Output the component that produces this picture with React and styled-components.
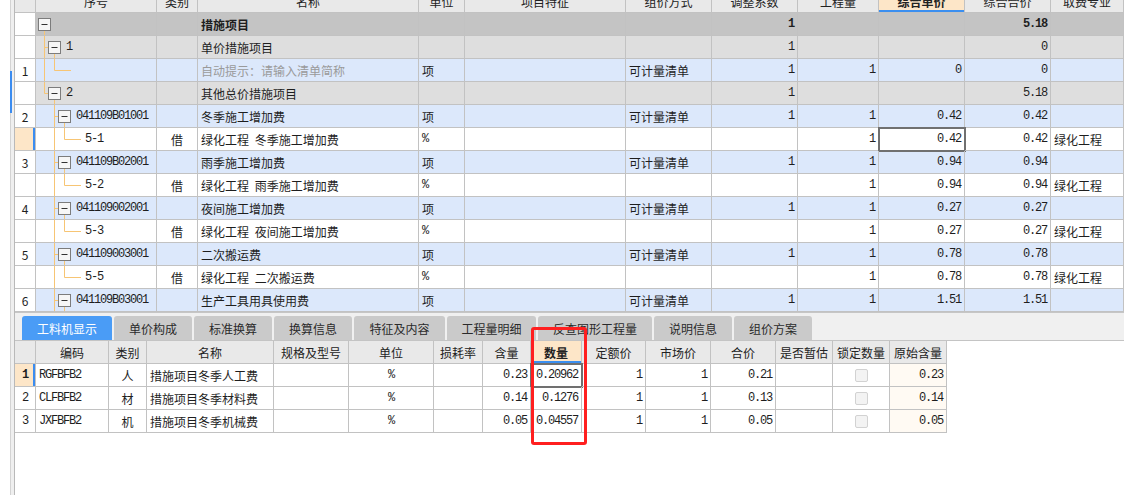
import React from 'react'
import styled, { createGlobalStyle } from 'styled-components'

// Columns (widths include each cell's right border)
const TOP_COLS = '21px 121px 41px 221px 46px 161px 86px 86px 81px 86px 86px 1fr'
const BOTTOM_COLS = '21px 73px 38px 127px 75px 85px 49px 48px 51px 64px 65px 65px 57px 57px 57px'

const ROW_BG = {
  head: '#e9e9e9',
  top: '#c4c4c4',
  group: '#dedede',
  list: '#dce8fb',
  quota: '#ffffff'
}

const topHeader = ['', '序号', '类别', '名称', '单位', '项目特征', '组价方式', '调整系数', '工程量', '综合单价', '综合合价', '取费专业']

const topRows = [
  { kind: 'top', tree: 'root', name: '措施项目', adj: '1', total: '5.18', bold: true },
  { kind: 'group', tree: 'group', code: '1', name: '单价措施项目', adj: '1', total: '0' },
  { kind: 'list', num: '1', tree: 'hint', name: '自动提示：请输入清单简称', hint: true, unit: '项', method: '可计量清单', adj: '1', qty: '1', price: '0', total: '0' },
  { kind: 'group', tree: 'groupLast', code: '2', name: '其他总价措施项目', adj: '1', total: '5.18' },
  { kind: 'list', num: '2', tree: 'list', code: '041109B01001', name: '冬季施工增加费', unit: '项', method: '可计量清单', adj: '1', qty: '1', price: '0.42', total: '0.42' },
  { kind: 'quota', tree: 'quota', code: '5-1', type: '借', name: '绿化工程 冬季施工增加费', unit: '%', qty: '1', price: '0.42', total: '0.42', fee: '绿化工程', current: true },
  { kind: 'list', num: '3', tree: 'list', code: '041109B02001', name: '雨季施工增加费', unit: '项', method: '可计量清单', adj: '1', qty: '1', price: '0.94', total: '0.94' },
  { kind: 'quota', tree: 'quota', code: '5-2', type: '借', name: '绿化工程 雨季施工增加费', unit: '%', qty: '1', price: '0.94', total: '0.94', fee: '绿化工程' },
  { kind: 'list', num: '4', tree: 'list', code: '041109002001', name: '夜间施工增加费', unit: '项', method: '可计量清单', adj: '1', qty: '1', price: '0.27', total: '0.27' },
  { kind: 'quota', tree: 'quota', code: '5-3', type: '借', name: '绿化工程 夜间施工增加费', unit: '%', qty: '1', price: '0.27', total: '0.27', fee: '绿化工程' },
  { kind: 'list', num: '5', tree: 'list', code: '041109003001', name: '二次搬运费', unit: '项', method: '可计量清单', adj: '1', qty: '1', price: '0.78', total: '0.78' },
  { kind: 'quota', tree: 'quota', code: '5-5', type: '借', name: '绿化工程 二次搬运费', unit: '%', qty: '1', price: '0.78', total: '0.78', fee: '绿化工程' },
  { kind: 'list', num: '6', tree: 'list', code: '041109B03001', name: '生产工具用具使用费', unit: '项', method: '可计量清单', adj: '1', qty: '1', price: '1.51', total: '1.51' }
]

const tabs = [
  { label: '工料机显示', width: 90, active: true },
  { label: '单价构成', width: 78 },
  { label: '标准换算', width: 78 },
  { label: '换算信息', width: 78 },
  { label: '特征及内容', width: 91 },
  { label: '工程量明细', width: 89 },
  { label: '反查图形工程量', width: 114 },
  { label: '说明信息', width: 78 },
  { label: '组价方案', width: 78 }
]

const bottomHeader = ['', '编码', '类别', '名称', '规格及型号', '单位', '损耗率', '含量', '数量', '定额价', '市场价', '合价', '是否暂估', '锁定数量', '原始含量']

const bottomRows = [
  { num: '1', code: 'RGFBFB2', type: '人', name: '措施项目冬季人工费', content: '0.23', qty: '0.20962', sum: '0.21', orig: '0.23', current: true },
  { num: '2', code: 'CLFBFB2', type: '材', name: '措施项目冬季材料费', content: '0.14', qty: '0.1276', sum: '0.13', orig: '0.14' },
  { num: '3', code: 'JXFBFB2', type: '机', name: '措施项目冬季机械费', content: '0.05', qty: '0.04557', sum: '0.05', orig: '0.05' }
]

// Tree connectors for the 序号 column
const TREE = {
  root: { width: 20, box: 2.5, lines: [[8.5, 17, 8.5, 23]] },
  group: { width: 30, box: 12.5, lines: [[8.5, 0, 8.5, 23], [8.5, 11.5, 12, 11.5], [18.5, 17, 18.5, 23]] },
  groupLast: { width: 30, box: 12.5, lines: [[8.5, 0, 8.5, 11.5], [8.5, 11.5, 12, 11.5], [18.5, 17, 18.5, 23]] },
  hint: { width: 40, lines: [[8.5, 0, 8.5, 23], [18.5, 0, 18.5, 11.5], [18.5, 11.5, 35, 11.5]] },
  list: { width: 40, box: 22.5, lines: [[18.5, 0, 18.5, 23], [18.5, 11.5, 22, 11.5], [28.5, 17, 28.5, 23]] },
  quota: { width: 49, lines: [[18.5, 0, 18.5, 23], [28.5, 0, 28.5, 11.5], [28.5, 11.5, 45, 11.5]] }
}

const TreeBranch = ({ type }) => {
  const t = TREE[type]
  return (
    <Branch width={t.width} height="22" viewBox={`0 0 ${t.width} 22`}>
      {t.lines.map(([x1, y1, x2, y2], i) => (
        <line key={i} x1={x1} y1={y1} x2={x2} y2={y2} stroke="#f7c574" strokeWidth="1" />
      ))}
      {t.box !== undefined && (
        <g>
          <rect x={t.box} y="5.5" width="12" height="12" fill="#f6f6f6" stroke="#7c7c7c" />
          <line x1={t.box + 3} y1="11.5" x2={t.box + 9} y2="11.5" stroke="#333" />
        </g>
      )}
    </Branch>
  )
}

const App = () => (
  <Page>
    <GlobalStyle />
    <Side>
      <Rail>
        <ScrollMark />
      </Rail>
    </Side>
    <Main>
      <TopGrid>
        <Scroller>
          <Row $cols={TOP_COLS} $bg={ROW_BG.head}>
            {topHeader.map((h, i) => (
              <HeadCell key={i} $active={h === '综合单价'}>{h}</HeadCell>
            ))}
          </Row>
          {topRows.map((r, i) => (
            <Row key={i} $cols={TOP_COLS} $bg={ROW_BG[r.kind]}>
              <NumCell $current={r.current}>{r.num}</NumCell>
              <TreeCell>
                <TreeBranch type={r.tree} />
                {r.code && <Mono>{r.code}</Mono>}
              </TreeCell>
              <Cell $align="center">{r.type}</Cell>
              <Cell $bold={r.bold} $muted={r.hint}>{r.name}</Cell>
              <Cell>{r.unit === '%' ? <Mono>%</Mono> : r.unit}</Cell>
              <Cell />
              <Cell>{r.method}</Cell>
              <Cell $align="right" $bold={r.bold}><Mono>{r.adj}</Mono></Cell>
              <Cell $align="right"><Mono>{r.qty}</Mono></Cell>
              <Cell $align="right" $selected={r.current}><Mono>{r.price}</Mono></Cell>
              <Cell $align="right" $bold={r.bold}><Mono>{r.total}</Mono></Cell>
              <Cell>{r.fee}</Cell>
            </Row>
          ))}
        </Scroller>
      </TopGrid>

      <TabBar>
        {tabs.map(t => (
          <Tab key={t.label} $width={t.width} $active={t.active}>{t.label}</Tab>
        ))}
      </TabBar>

      <Bottom>
        <Table>
          <Row $cols={BOTTOM_COLS} $bg={ROW_BG.head}>
            {bottomHeader.map((h, i) => (
              <HeadCell key={i} $active={h === '数量'}>{h}</HeadCell>
            ))}
          </Row>
          {bottomRows.map(r => (
            <Row key={r.num} $cols={BOTTOM_COLS} $bg="#fff">
              <NumCell $current={r.current}><Mono>{r.num}</Mono></NumCell>
              <Cell><Mono>{r.code}</Mono></Cell>
              <Cell $align="center">{r.type}</Cell>
              <Cell>{r.name}</Cell>
              <Cell />
              <Cell $align="center"><Mono>%</Mono></Cell>
              <Cell />
              <Cell $align="right"><Mono>{r.content}</Mono></Cell>
              <Cell $align="right" $selected={r.current}><Mono>{r.qty}</Mono></Cell>
              <Cell $align="right"><Mono>1</Mono></Cell>
              <Cell $align="right"><Mono>1</Mono></Cell>
              <Cell $align="right"><Mono>{r.sum}</Mono></Cell>
              <Cell />
              <Cell $align="center"><Check /></Cell>
              <Cell $align="right" $tint><Mono>{r.orig}</Mono></Cell>
            </Row>
          ))}
        </Table>
      </Bottom>
    </Main>
    <RedMark />
  </Page>
)

// Styles
const GlobalStyle = createGlobalStyle`
  html, body {
    margin: 0;
    padding: 0;
    background: #fff;
  }
  body {
    font-family: "Noto Sans CJK SC", "Noto Sans", sans-serif;
    font-size: 12px;
    color: #1e1e1e;
  }
`

const Page = styled.div`
  position: relative;
  display: flex;
  width: 1124px;
  height: 495px;
  overflow: hidden;
  background: #fff;
`

const Side = styled.div`
  width: 15px;
  flex: none;
  display: flex;
  justify-content: flex-end;
`

const Rail = styled.div`
  box-sizing: border-box;
  width: 5px;
  border-left: 1px solid #d3d3d3;
  border-right: 1px solid #b9b9b9;
  background: #efefef;
`

const ScrollMark = styled.div`
  width: 2px;
  height: 42px;
  margin: 71px 0 0 -1px;
  background: #3b8cf0;
`

const Main = styled.div`
  flex: 1;
  display: flex;
  flex-direction: column;
  min-width: 0;
`

const TopGrid = styled.div`
  height: 312px;
  overflow: hidden;
  border-bottom: 1px solid #c6c6c6;
  flex: none;
`

const Scroller = styled.div`
  margin-top: -10px;
`

const Row = styled.div`
  display: grid;
  grid-template-columns: ${p => p.$cols};
  background: ${p => p.$bg};
`

const Cell = styled.div`
  box-sizing: border-box;
  height: 23px;
  padding: 0 3px;
  display: flex;
  align-items: center;
  justify-content: ${p => (p.$align === 'right' ? 'flex-end' : p.$align === 'center' ? 'center' : 'flex-start')};
  border-right: 1px solid #c2c2c2;
  border-bottom: 1px solid #c2c2c2;
  white-space: pre;
  word-spacing: 3px;
  overflow: hidden;
  font-weight: ${p => (p.$bold ? 700 : 400)};
  color: ${p => (p.$muted ? '#9a9a9a' : '#1e1e1e')};
  background: ${p => (p.$tint ? '#fffaf3' : 'transparent')};
  outline: ${p => (p.$selected ? '2px solid #707070' : 'none')};
  outline-offset: -1px;
`

const HeadCell = styled(Cell)`
  justify-content: center;
  overflow: visible;
  color: #222;
  font-weight: ${p => (p.$active ? 700 : 400)};
  background: ${p => (p.$active ? '#fde6c8' : 'transparent')};
  box-shadow: ${p => (p.$active ? 'inset 0 -2px 0 #3b8ff0' : 'none')};
`

const NumCell = styled(Cell)`
  justify-content: center;
  background: ${p => (p.$current ? '#fde6c8' : '#fff')};
  font-weight: ${p => (p.$current ? 700 : 400)};
  box-shadow: ${p => (p.$current ? 'inset -2px 0 0 #3b8cf0' : 'none')};
`

const TreeCell = styled(Cell)`
  padding: 0;
  align-items: flex-start;
  line-height: 22px;
`

const Branch = styled.svg`
  display: block;
  flex: none;
`

const Mono = styled.span`
  font-family: "Liberation Mono", "DejaVu Sans Mono", monospace;
  font-size: 12px;
  letter-spacing: -1.2px;
  word-spacing: 0;
  font-weight: inherit;
`

const TabBar = styled.div`
  flex: none;
  box-sizing: border-box;
  height: 28px;
  display: flex;
  align-items: flex-end;
  gap: 2px;
  padding-left: 7px;
  background: #f0f0f0;
  border-bottom: 1px solid #c4c4c4;
`

const Tab = styled.div`
  width: ${p => p.$width}px;
  height: 24px;
  display: flex;
  align-items: center;
  justify-content: center;
  border-radius: 3px 3px 0 0;
  font-size: 12px;
  background: ${p => (p.$active ? '#4a9cf6' : '#cacaca')};
  color: ${p => (p.$active ? '#fff' : '#2a2a2a')};
`

const Bottom = styled.div`
  flex: 1;
  background: #fff;
`

const Table = styled.div`
  width: 932px;
`

const Check = styled.span`
  box-sizing: border-box;
  width: 13px;
  height: 13px;
  border: 1px solid #d2d2d2;
  border-radius: 2px;
  background: #f3f3f3;
`

const RedMark = styled.div`
  position: absolute;
  left: 531px;
  top: 327px;
  width: 56px;
  height: 118px;
  box-sizing: border-box;
  border: 3px solid #ff1f1f;
  border-radius: 3px;
  pointer-events: none;
`

export default App
